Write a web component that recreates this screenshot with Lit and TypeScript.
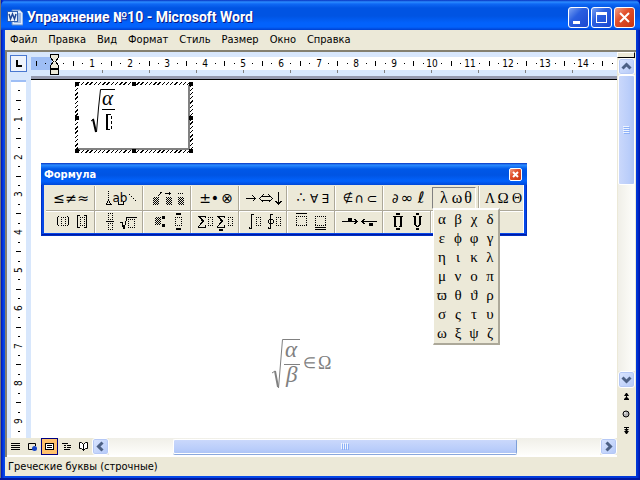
import { LitElement, html, svg, css } from "lit";
import { customElement } from "lit/decorators.js";

const UNIT = 37.8;
const LAST_COLUMN_MARK = 14;
const LAST_ROW_MARK = 9;

const MENU = ["Файл", "Правка", "Вид", "Формат", "Стиль", "Размер", "Окно", "Справка"];

const GREEK = "αβχδεϕφγηικλμνοπϖθϑρσςτυωξψζ".split("");

// Glyph centred on x, sitting on baseline y.
const g = (ch: string, x: number, y = 15, size = 14, cls = "") =>
  svg`<text class=${cls} x=${x} y=${y} font-size=${size} text-anchor="middle">${ch}</text>`;
// Dotted placeholder.
const box = (x: number, y: number, w: number, h: number) =>
  svg`<path class="ln" stroke-dasharray="1 1" d=${`M${x} ${y + 0.5}h${w + 1}M${x} ${y + h + 0.5}h${w + 1}M${x + 0.5} ${y + 2}v${h - 2}M${x + w + 0.5} ${y + 2}v${h - 2}`} />`;
// Checkered (filled) placeholder.
const fill = (x: number, y: number, w: number, h: number) =>
  svg`<rect x=${x} y=${y} width=${w} height=${h} fill="url(#chk)" />`;
const line = (d: string) => svg`<path class="ln" d=${d} />`;
const bar = (x: number, y: number, w: number, h: number) =>
  svg`<rect x=${x} y=${y} width=${w} height=${h} />`;

const TOP_ROW = [
  { name: "Отношения", art: [g("≤", 10), g("≠", 22), g("≈", 34)] },
  {
    name: "Пробелы",
    art: [line("M11.5 3v1M11.5 5v1M11.5 7v1M11.5 9v1M11.5 11v2M10.5 13v2M12.5 13v2M8.5 16.5h6M9.5 15v1M13.5 15v1"),
      g("ab", 23, 14, 12), line("M21.5 14v2.5h5v-2.5"), line("M32 6.5h1M34 8.5h1M36 10.5h1M38 12.5h1")],
  },
  {
    name: "Надстрочные знаки",
    art: [fill(8, 9, 6, 8), line("M13.5 8l3-4"), fill(21, 9, 6, 8), line("M20 5.5h6M24.5 4v3"),
      fill(33, 9, 6, 8), line("M33 5.5h1M35 5.5h1M37 5.5h1")],
  },
  { name: "Операторы", art: [g("±", 12), g("•", 22, 15, 14), g("⊗", 34, 15, 14)] },
  { name: "Стрелки", art: [line("M5 10.5h9M11.5 7.5l3 3l-3 3"), line("M21 8.5h8M21 12.5h8M22.5 6.5l-4 4l4 4M27.5 6.5l4 4l-4 4"), line("M37.5 4v12M34.5 13l3 3l3-3")] },
  { name: "Логические символы", art: [g("∴", 12, 14, 14), g("∀", 25, 15, 12), g("∃", 36, 15, 12)] },
  { name: "Теория множеств", art: [g("∉", 11, 14, 12), g("∩", 22, 15, 13), g("⊂", 35, 15, 13)] },
  { name: "Разные символы", art: [g("∂", 10, 15, 13), g("∞", 22, 15, 15), g("ℓ", 36, 15, 16)] },
  { name: "Греческие буквы (строчные)", art: [g("λ", 12, 15, 16, "gr"), g("ω", 25, 15, 16, "gr"), g("θ", 36, 15, 16, "gr")] },
  { name: "Греческие буквы (прописные)", art: [g("Λ", 9, 15, 14, "gr"), g("Ω", 22, 15, 15, "gr"), g("Θ", 36, 15, 14, "gr")] },
];

const BOTTOM_ROW = [
  { name: "Скобки", art: [line("M9.5 4l-1 2v6l1 2M18.5 4l1 2v6l-1 2"), box(12, 5, 4, 8), line("M31 3.5h-2.5v12h2.5M35 3.5h2.5v12h-2.5"), box(31, 5, 4, 8)] },
  { name: "Дроби и радикалы", art: [box(11, 1, 4, 6), line("M9 9.5h8"), box(11, 11, 4, 6), line("M23 10.5h2l2 6l3-11h10"), line("M25.5 11v4"), box(31, 7, 6, 8)] },
  { name: "Индексы", art: [fill(10, 5, 6, 8), bar(17, 4, 3, 3), bar(17, 12, 3, 3), box(30, 5, 6, 8), bar(31, 1, 5, 2), bar(31, 16, 5, 2)] },
  { name: "Суммы", art: [line("M12.5 6v-2h-7l4 5l-4 6h7v-2M6.5 5l4 4l-4 5"), box(15, 5, 4, 8), line("M31.5 6v-2h-7l4 5l-4 6h7v-2M25.5 5l4 4l-4 5"), bar(26, 17, 4, 2), box(35, 5, 4, 8)] },
  { name: "Интегралы", art: [line("M12.5 3v-1h-2v14h-2v-1"), box(15, 5, 4, 8), line("M31.5 3v-1h-2v14h-2v-1M28.5 7.5h3l1 1v2l-1 1h-3l-1-1v-2z"), box(35, 5, 4, 8)] },
  { name: "Черта сверху и снизу", art: [line("M7 1.5h11"), box(7, 4, 10, 9), box(26, 4, 10, 9), line("M26 15.5h11M26 17.5h11")] },
  { name: "Стрелки с текстом", art: [line("M5 9.5h15M17.5 7l2.5 2.5l-2.5 2.5"), bar(11, 6, 4, 3), line("M25 9.5h15M27.5 7l-2.5 2.5l2.5 2.5"), bar(32, 11, 4, 3)] },
  { name: "Произведения", art: [line("M8 4.5h10M10.5 4v10M15.5 4v10M9 14.5h3M14 14.5h3M9.5 4v10M16.5 4v10"), bar(11, 1, 4, 2), bar(11, 16, 4, 2), line("M28 4.5h3M34 4.5h3M29.5 4v8l2 2h2l2-2V4M30.5 4v8M34.5 4v8"), bar(31, 1, 3, 2), bar(31, 16, 3, 2)] },
  { name: "Матрицы", art: [] },
  { name: "Рамки", art: [] },
];

const chevron = (d: string) =>
  html`<svg width="15" height="15" viewBox="0 0 15 15"><path class="chev" d=${d} /></svg>`;

@customElement("app-root")
export class AppRoot extends LitElement {
  static styles = css`
    :host {
      display: block;
      font: 11px/14px "DejaVu Sans Condensed", "DejaVu Sans", "Noto Sans", sans-serif;
      color: #000;
    }
    * { box-sizing: border-box; }
    button { font: inherit; color: inherit; padding: 0; margin: 0; border: 0; background: none; display: grid; place-items: center; }
    svg { display: block; }
    .window {
      height: 100vh;
      display: flex;
      flex-direction: column;
      padding: 0 4px 4px 5px;
      background: linear-gradient(90deg, #767676 1px, #0013a8 1px, #0029d0 2px, #0548e8 4px, #0548e8 50%, #0037d8 calc(100% - 3px), #0013a8);
      box-shadow: inset 0 -2px 0 #0018a0;
    }
    .title {
      display: flex;
      align-items: center;
      flex: none;
      gap: 4px;
      height: 30px;
      margin: 0 -4px;
      padding: 4px 5px 0 6px;
      border-radius: 6px 6px 0 0;
      background: linear-gradient(#0832c0 0, #2b8cff 2px, #0f68f4 4px, #0054e3 8px, #0054e3 16px, #0262fc 23px, #0262fc 27px, #0040d0 30px);
    }
    h1 {
      flex: 1;
      margin: 0;
      font: bold 14px/20px Roboto, "Noto Sans", sans-serif;
      color: #fff;
      text-shadow: 1px 1px 0 #0a1883;
      white-space: nowrap;
    }
    .caps { display: flex; gap: 2px; }
    .cap { width: 21px; height: 21px; border: 1px solid #fff; border-radius: 3px; background: linear-gradient(135deg, #7ba2f2, #2a5fe0 40%, #1c48d0); }
    .cap.close { background: linear-gradient(135deg, #f0a088, #e2502c 40%, #c83410); }
    .menubar { display: flex; flex: none; gap: 11px; height: 19px; padding: 2px 5px; background: #ece9d8; }
    .client {
      flex: 1;
      min-height: 0;
      display: grid;
      grid-template: 28px minmax(0, 1fr) 19px / 24px minmax(0, 1fr) 19px;
      border-top: 2px solid #848070;
      border-left: 2px solid #848070;
      margin-top: 1px;
      background: #ece9d8;
      box-shadow: 0 -1px 0 #ece9d8;
    }
    .corner { background: #d8e7fc; padding: 3px; }
    .tab { width: 17px; height: 17px; border: 1px solid #4a78d0; background: #eef3fc; }
    .hruler { background: #d8e7fc; border-bottom: 1px solid #000; overflow: hidden; }
    .vruler { background: #d8e7fc; overflow: hidden; padding-left: 4px; }
    .vruler svg { background: #fff; }
    .ruler-text { font: 10px "DejaVu Sans Condensed", "DejaVu Sans", sans-serif; }
    .page { position: relative; background: #fff; overflow: hidden; min-height: 0; }
    .object {
      width: 118px;
      height: 71px;
      margin: 2px 0 0 44px;
      padding: 3px;
      background: repeating-linear-gradient(135deg, #000 0 1px, #fff 1px 3px);
      position: relative;
    }
    .inner { height: 100%; background: #fff; border: solid #808080; border-width: 0 2px 2px 0; padding: 4px 12px; }
    .handles { position: absolute; inset: 0; display: grid; grid-template-columns: repeat(3, 4px); justify-content: space-between; align-content: space-between; }
    .handles i { width: 4px; height: 4px; background: #000; }
    .handles .mid { visibility: hidden; }
    .formula { display: block; margin: 185px 0 0 240px; }
    .formula text, .inner text { font-family: "Liberation Serif", serif; }
    .it { font-style: italic; }
    .vscroll { grid-row: 1 / 4; grid-column: 3; display: flex; flex-direction: column; padding: 0 1px 0 0; align-items: stretch; background: #ece9d8; }
    .split { height: 6px; flex: none; background: #ece9d8; border: 1px solid #fff; border-color: #fff #000 #000 #fff; }
    .sbtn { width: 17px; height: 17px; flex: none; border: 1px solid #fff; border-radius: 3px; background: linear-gradient(135deg, #dbe6ff, #b4c9f8); box-shadow: inset 0 0 0 1px #b5c8f5; }
    .vscroll .sbtn { margin-left: 1px; }
    .chev { fill: none; stroke: #4d6185; stroke-width: 3; }
    .vtrack { flex: 1; margin-left: 1px; background: linear-gradient(90deg, #f0efe8, #fefefb); min-height: 0; }
    .vthumb { height: 37%; width: 17px; border: 1px solid #fff; border-radius: 2px; background: linear-gradient(90deg, #cad8fb, #b9cdfa 70%, #aec4f5); display: grid; place-items: center; }
    .nav { flex: none; height: 69px; display: flex; flex-direction: column; padding-top: 5px; gap: 9px; align-items: center; }
    .bottom { grid-column: 1 / 3; display: flex; align-items: center; border-bottom: 2px solid #fff; background: #ece9d8; min-width: 0; }
    .views { display: flex; flex: none; width: 85px; }
    .views button { width: 17px; height: 17px; }
    .views .on { background: #ffc26e; border: 1px solid #000080; }
    .htrack { flex: 1; min-width: 0; height: 17px; padding: 1px 0; background: linear-gradient(#f0efe8, #fefefb); display: flex; }
    .hthumb { width: 70%; margin-left: 13%; border: 1px solid #fff; border-right-color: #7d9fd8; border-radius: 2px; background: linear-gradient(#cad8fb, #b9cdfa 70%, #aec4f5); box-shadow: 0 1px 0 #8aa8dc; display: grid; place-items: center; }
    .status { flex: none; height: 19px; padding: 3px 3px; background: #ece9d8; }
    .palette { position: absolute; left: 10px; top: 83px; width: 486px; background: #0548e8; padding: 0 3px 3px; box-shadow: inset 0 0 0 1px #0030c0, inset 0 -2px 0 #0018a8; }
    .ptitle { display: flex; justify-content: space-between; align-items: center; height: 22px; margin: 0 -3px; padding: 1px 5px 0 3px; background: linear-gradient(#0832c0 0, #2b8cff 2px, #0058e8 6px, #0054e3 12px, #0262fc 18px, #0048d8 22px); }
    h2 { margin: 0; font: bold 11px/14px "DejaVu Sans Condensed", "DejaVu Sans", sans-serif; color: #fff; }
    .ptitle .cap { width: 13px; height: 13px; border-radius: 2px; }
    .tools { background: #ece9d8; padding: 1px 0 0 2px; border: 1px solid #fff; border-width: 0 1px 0 0; overflow: hidden; }
    .row { display: grid; grid-template-columns: repeat(10, 48px); height: 24px; }
    .row + .row { border-top: 1px solid #aca899; box-shadow: inset 0 1px 0 #fff; height: 23px; }
    .tool { border-left: 1px solid #aca899; box-shadow: inset 1px 0 0 #fff; }
    .tool:first-child { border-left-color: transparent; box-shadow: none; }
    .tool svg { width: 44px; height: 20px; shape-rendering: crispEdges; overflow: visible; }
    .tool text { font-family: "DejaVu Sans", sans-serif; }
    .tool .gr { font-family: "Liberation Serif", serif; }
    .tool.on { border: 1px solid #aca899; border-color: #808080 #fff #fff #808080; margin: 1px 2px; box-shadow: none; }
    .tool.on svg { margin: 0 -1px; }
    .ln { fill: none; stroke: #000; stroke-width: 1; }
    .greek { position: absolute; left: 402px; top: 128px; width: 67px; display: grid; grid-template-columns: repeat(4, 16px); grid-auto-rows: 19px; background: #ece9d8; border: 2px solid; border-color: #fff #aca899 #aca899 #fff; border-left-width: 1px; }
    .greek button { font: 15px/19px "Liberation Serif", "DejaVu Serif", serif; }
  `;

  private hRuler() {
    const marks = [];
    for (let n = 0; n < 50; n++) {
      const x = 23 + n * UNIT;
      if (n && n <= LAST_COLUMN_MARK) marks.push(svg`<text class="ruler-text" text-anchor="middle" x=${Math.round(x)} y="15">${n}</text>`);
      marks.push(svg`<path class="ln" d=${`M${Math.round(x + UNIT / 4)} 11.5h1M${Math.round(x + UNIT / 2)}.5 9v5M${Math.round(x + (3 * UNIT) / 4)} 11.5h1`} />`);
      marks.push(svg`<path stroke="#808080" d=${`M${71 + n * 47}.5 18v3`} />`);
    }
    return html`<svg width="2000" height="28" shape-rendering="crispEdges">
      <rect y="5" width="2000" height="13" fill="#fff" />
      <rect y="5" width="21" height="13" fill="#9ebef5" />
      <rect y="24" width="2000" height="3" fill="#9599ad" />
      <path class="ln" d="M5.5 9v5M14 11.5h1" />
      ${marks}
      <path d="M19.5 2.5h8v3l-3 4l3 4v3h-8v-3l3-4l-3-4zM19.5 17.5h8v5h-8z" fill="#ece9d8" stroke="#000" />
    </svg>`;
  }

  private vRuler() {
    const marks = [];
    for (let n = 0; n < 40; n++) {
      const y = 1 + n * UNIT;
      const at = Math.round(y);
      if (n && n <= LAST_ROW_MARK) marks.push(svg`<text class="ruler-text" text-anchor="middle" transform=${`rotate(-90 11 ${at})`} x="11" y=${at}>${n}</text>`);
      marks.push(svg`<path class="ln" d=${`M7 ${Math.round(y + UNIT / 4)}.5h2M5 ${Math.round(y + UNIT / 2)}.5h5M7 ${Math.round(y + (3 * UNIT) / 4)}.5h2`} />`);
    }
    return html`<svg width="15" height="1600" shape-rendering="crispEdges">
      <rect width="15" height="2" fill="#9ebef5" />${marks}</svg>`;
  }

  private tool(t: { name: string; art: unknown[] }, on = false) {
    return html`<button class=${on ? "tool on" : "tool"} aria-label=${t.name}>
      <svg viewBox="0 0 44 20">
        <defs><pattern id="chk" width="2" height="2" patternUnits="userSpaceOnUse">
          <rect width="1" height="1" /><rect x="1" y="1" width="1" height="1" /></pattern></defs>
        ${t.art}
      </svg></button>`;
  }

  render() {
    return html`<div class="window">
      <header class="title">
        <svg width="16" height="17" viewBox="0 0 16 17">
          <path d="M5 1h8l3 3v12H5z" fill="#dce9fb" stroke="#5c86c8" />
          <path d="M11 5h3M11 7h3M11 9h3M11 11h3M7 13h7" stroke="#5c86c8" />
          <rect x="0.5" y="2.5" width="10" height="10" fill="#e8f0fc" stroke="#2f5eb0" />
          <path d="M2 5l1.500 5l2-5l2 5l1.500-5" fill="none" stroke="#1d4596" stroke-width="1.500" />
        </svg>
        <h1>Упражнение №10 - Microsoft Word</h1>
        <div class="caps">
          <button class="cap" aria-label="Свернуть"><svg width="19" height="19"><path d="M4 13h7v3H4z" fill="#fff" /></svg></button>
          <button class="cap" aria-label="Развернуть"><svg width="19" height="19"><path d="M4 4h11v11H4zM5 7v7h9V7z" fill="#fff" fill-rule="evenodd" /></svg></button>
          <button class="cap close" aria-label="Закрыть"><svg width="19" height="19"><path d="M5 5l9 9M14 5l-9 9" stroke="#fff" stroke-width="2" /></svg></button>
        </div>
      </header>
      <nav class="menubar">${MENU.map((m) => html`<button>${m}</button>`)}</nav>
      <main class="client">
        <div class="corner"><button class="tab" aria-label="Табуляция"><svg width="15" height="15"><path d="M5 4h2v5h4v2H5z" /></svg></button></div>
        <div class="hruler">${this.hRuler()}</div>
        <div class="vscroll">
          <div class="split"></div>
          <button class="sbtn" aria-label="Вверх">${chevron("M3.500 9.500l4-4l4 4")}</button>
          <div class="vtrack"><div class="vthumb"><svg width="7" height="8"><path d="M0 .5h6M0 2.500h6M0 4.500h6M0 6.500h6" stroke="#eef4fe" /><path d="M1 1.500h6M1 3.500h6M1 5.500h6M1 7.500h6" stroke="#8cb0f8" /></svg></div></div>
          <button class="sbtn" aria-label="Вниз">${chevron("M3.500 5.500l4 4l4-4")}</button>
          <div class="nav">
            <button aria-label="Предыдущая страница"><svg width="7" height="8"><path d="M3 0h1l2 3H1zM3 3h1v1l2 2H1l2-2zM1 6h5v1H1z" /></svg></button>
            <button aria-label="Выбор объекта"><svg width="8" height="8"><circle cx="4" cy="4" r="3" fill="#b4b4b4" stroke="#000" /><path d="M2 3h2" stroke="#fff" /></svg></button>
            <button aria-label="Следующая страница"><svg width="7" height="8"><path d="M1 0h5v1H4v1h2L4 4h2L4 7H3L1 4h2L1 2h2V1H1z" /></svg></button>
          </div>
        </div>
        <div class="vruler">${this.vRuler()}</div>
        <section class="page">
          <div class="object">
            <div class="inner">
              <svg width="30" height="46" viewBox="0 0 30 46">
                <path d="M1 32l3-2" fill="none" stroke="#000" />
                <path d="M3 30l3 13" stroke="#000" stroke-width="2" />
                <path d="M6.500 43L8.500 19L10.500 .5H25" fill="none" stroke="#000" />
                <text class="it" x="12" y="16" font-size="21">α</text>
                <path d="M12 20.500h13" stroke="#000" />
                <path class="ln" d="M19 25.500h-3M19 40.500h-3" />
                <path d="M17 25v15" stroke="#000" stroke-width="2" />
                <path d="M18 25.500h3.500v15H17" fill="none" stroke="#000" stroke-dasharray="3 2" />
              </svg>
            </div>
            <div class="handles"><i></i><i></i><i></i><i></i><i class="mid"></i><i></i><i></i><i></i><i></i></div>
          </div>
          <svg class="formula" width="66" height="54" viewBox="0 0 66 54" fill="#808080">
            <path d="M1 35l3-2" stroke="#808080" /><path d="M4 33l3 16" stroke="#808080" stroke-width="2" />
            <path d="M7.500 50L11.500 1.500H29M13 26.500h16" fill="none" stroke="#808080" />
            <text class="it" x="14" y="19" font-size="23">α</text>
            <text class="it" x="15" y="44" font-size="23">β</text>
            <text x="32" y="30" font-size="15">∈</text>
            <text x="47" y="31" font-size="18">Ω</text>
          </svg>
          <aside class="palette">
            <div class="ptitle"><h2>Формула</h2>
              <button class="cap close" aria-label="Закрыть панель"><svg width="11" height="11"><path d="M3 3l5 5M8 3l-5 5" stroke="#fff" stroke-width="2" /></svg></button>
            </div>
            <div class="tools">
              <div class="row">${TOP_ROW.map((t, i) => this.tool(t, i === 8))}</div>
              <div class="row">${BOTTOM_ROW.map((t) => this.tool(t))}</div>
            </div>
          </aside>
          <div class="greek">${GREEK.map((c) => html`<button>${c}</button>`)}</div>
        </section>
        <div class="bottom">
          <div class="views">
            <button aria-label="Обычный"><svg width="15" height="15" shape-rendering="crispEdges"><path class="ln" d="M3 4.500h9M3 6.500h9M3 8.500h9M3 10.500h9" /></svg></button>
            <button aria-label="Веб-документ"><svg width="15" height="15"><path d="M9 10.500H3.500v-6h7V7" fill="none" stroke="#000" /><circle cx="9.500" cy="9.500" r="2.500" fill="#1846c8" /></svg></button>
            <button class="on" aria-label="Разметка страницы"><svg width="15" height="15" shape-rendering="crispEdges"><path d="M3.500 4.500h8v6h-8z" fill="#fff" stroke="#000" /><path d="M5 6.500h5M5 8.500h5" stroke="#000" /></svg></button>
            <button aria-label="Структура"><svg width="15" height="15" shape-rendering="crispEdges"><path class="ln" d="M3 4.500h6M5 6.500h2M8 6.500h4M5 8.500h2M8 8.500h4M5 10.500h6" /></svg></button>
            <button aria-label="Режим чтения"><svg width="15" height="15"><path d="M3.500 3.500h2l2 2l2-2h2v6h-2l-2 2l-2-2h-2zM7.500 5v7" fill="#fff" stroke="#000" /></svg></button>
          </div>
          <button class="sbtn" aria-label="Влево">${chevron("M9.500 3.500l-4 4l4 4")}</button>
          <div class="htrack"><div class="hthumb"><svg width="8" height="7"><path d="M.5 0v6M2.500 0v6M4.500 0v6M6.500 0v6" stroke="#eef4fe" /><path d="M1.500 1v6M3.500 1v6M5.500 1v6M7.500 1v6" stroke="#8cb0f8" /></svg></div></div>
          <button class="sbtn" aria-label="Вправо">${chevron("M5.500 3.500l4 4l-4 4")}</button>
        </div>
      </main>
      <footer class="status">Греческие буквы (строчные)</footer>
    </div>`;
  }
}
